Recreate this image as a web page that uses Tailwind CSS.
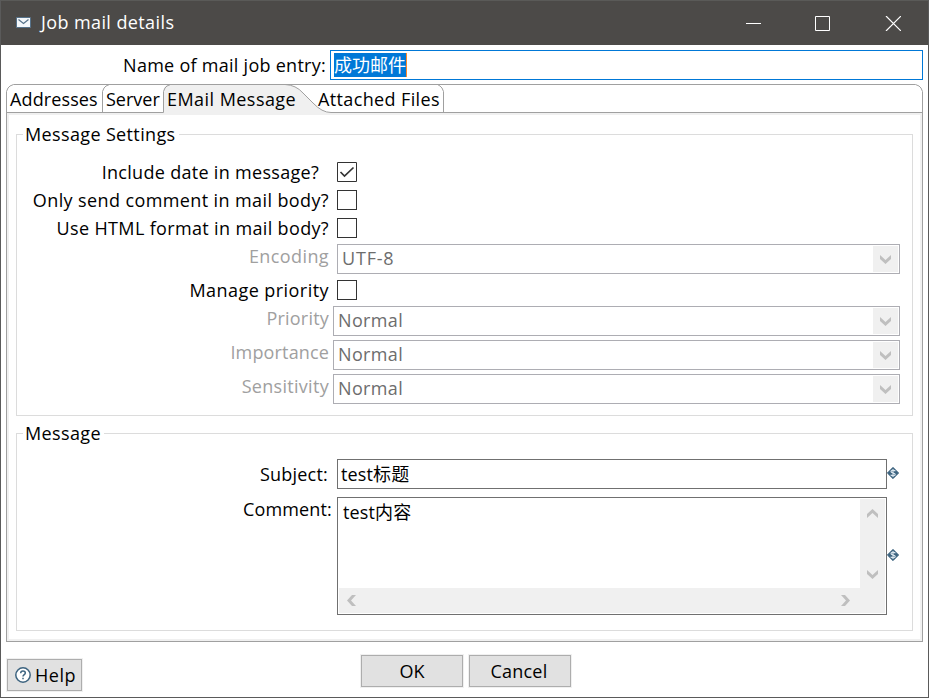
<!DOCTYPE html>
<html lang="en">
<head>
<meta charset="utf-8">
<title>Job mail details</title>
<script src="https://cdn.jsdelivr.net/npm/@tailwindcss/browser@4"></script>
</head>
<body class="overflow-hidden">
<svg class="hidden">
  <symbol id="chev" viewBox="0 0 11 9"><path d="M0 0L5.500 5L11 0V4L5.500 9L0 4Z" fill="currentColor"/></symbol>
  <symbol id="var" viewBox="0 0 12 12"><path d="M6 0.3L11.7 6L6 11.7L0.3 6Z" fill="#3d6480" stroke="#3d6480" stroke-width="0.8" stroke-linejoin="round"/><path d="M8.300 4.200C7.600 2.800 4 3 4 4.600C4 6.400 8.200 5.600 8.200 7.500C8.200 9.100 4.500 9.100 3.700 7.700M6 2V10" fill="none" stroke="#dbe6ee" stroke-width="1.200"/></symbol>
</svg>
<div class="flex h-[698px] w-[929px] flex-col border-x border-b border-[#5a5a5a] bg-white font-['Open_Sans','Noto_Sans_CJK_SC',sans-serif] text-[18px] leading-[28px] whitespace-nowrap text-black">
  <header class="flex h-[45px] shrink-0 items-center border-t border-[#5a5a58] bg-[#4c4a48] text-white">
    <svg class="-mt-[2px] ml-[15px] h-[11px] w-[15px]" viewBox="0 0 15 11"><rect x=".5" y=".5" width="14" height="10" rx=".5" fill="#f4f7fa" stroke="#56728a"/><path d="M2.500 2.500L7.500 6.500L12.500 2.500" fill="none" stroke="#56728a" stroke-width="1.200"/></svg>
    <span class="-mt-[2px] ml-[10px] grow tracking-[0.4px]">Job mail details</span>
    <svg class="mr-[27px] h-[15px] w-[155px]" viewBox="0 0 155 15" fill="none" stroke="#fff"><path d="M0 7.5H15M69.5 .5H83.5V14.5H69.5Z"/><path d="M140 0L155 15M155 0L140 15" stroke-width="1.2"/></svg>
  </header>

  <div class="mt-[5px] flex h-[30px] shrink-0 pr-[5px]">
    <label class="w-[329px] pr-[4px] text-right leading-[30px] tracking-[0.27px]">Name of mail job entry:</label>
    <div class="flex grow items-start border border-[#0078d7] px-[3px] pt-[2px]"><span class="h-[24px] w-[73px] border-r border-[#ff8728] bg-[#0078d7] leading-[25px] text-white">成功邮件</span></div>
  </div>

  <main class="mt-[4px] ml-[5px] flex h-[558px] w-[917px] shrink-0 flex-col">
    <nav class="relative flex h-[29px] shrink-0">
      <svg class="absolute inset-0 h-[29px] w-[917px]" viewBox="0 0 917 29" fill="none" stroke="#a0a0a0">
        <path d="M157.500 29V6Q158 1 163 .5H279Q290 1 297 9L307 19Q316 28.500 325 28.500V29Z" fill="#f0f0f0" stroke="none"/>
        <path d="M.5 29V7.500L2 4L4 2L7.500 .5H909.500L913 2L915 4L916.500 7.500V29"/>
        <path d="M96.500 28V7.500L98 4L100 2L103.500 .5M437.500 28V7.500L436 4L434 2L431.500 .5"/>
        <path d="M0 28.500H157.500V7.500L159 4L161 2L164.500 .5M279 .5Q290 1 297 9L307 19Q316 28.500 325 28.500H917"/>
      </svg>
      <span class="relative w-[96px] pl-[4px] leading-[30px] tracking-[0.12px]">Addresses</span>
      <span class="relative w-[61px] pl-[4px] leading-[30px]">Server</span>
      <span class="relative w-[151px] pl-[4px] leading-[30px] tracking-[0.45px]">EMail Message</span>
      <span class="relative pl-[4px] leading-[30px] tracking-[0.37px]">Attached Files</span>
    </nav>
    <div class="flex grow flex-col border-x border-b border-[#a0a0a0]">
      <div class="flex grow flex-col border-2 border-[#f0f0f0] px-[7px] pt-[19px]">
        <section class="h-[282px] border border-[#dcdcdc]">
          <h2 class="relative -top-[15px] ml-[6px] h-[27px] w-fit bg-white pr-[3px] pl-[2px] tracking-[0.36px]">Message Settings</h2>
          <div class="flex h-[28px] items-start"><span class="w-[320px] pr-[18px] text-right leading-[20px] tracking-[0.3px]">Include date in message?</span><svg class="h-[20px] w-[20px]" viewBox="0 0 20 20" fill="none"><path d="M.5 .5H19.500V19.500H.5Z" stroke="#333"/><path d="M3.500 10L7.500 14L16.500 5.500" stroke="#333" stroke-width="1.700"/></svg></div>
          <div class="flex h-[28px] items-start"><span class="w-[320px] pr-[8px] text-right leading-[20px] tracking-[0.39px]">Only send comment in mail body?</span><i class="size-[20px] border border-[#333]"></i></div>
          <div class="flex h-[26px] items-start"><span class="w-[320px] pr-[8px] text-right leading-[20px] tracking-[0.35px]">Use HTML format in mail body?</span><i class="size-[20px] border border-[#333]"></i></div>
          <div class="flex h-[36px] items-start text-[#a0a0a0]"><span class="w-[320px] pr-[8px] text-right leading-[24px] tracking-[0.4px]">Encoding</span><div class="flex h-[30px] w-[563px] border border-[#adadb3] p-px pl-[4px] text-[#6d6d6d]"><span class="grow leading-[24px] tracking-[0.8px]">UTF-8</span><b class="flex h-[26px] w-[25px] items-center justify-center bg-[#f0f0f0] text-[#bfbfbf]"><svg class="h-[9px] w-[11px]"><use href="#chev"/></svg></b></div></div>
          <div class="flex h-[26px] items-start"><span class="w-[320px] pr-[8px] text-right leading-[20px] tracking-[0.45px]">Manage priority</span><i class="size-[20px] border border-[#333]"></i></div>
          <div class="flex h-[34px] items-start text-[#a0a0a0]"><span class="w-[316px] pr-[4px] text-right leading-[24px] tracking-[0.2px]">Priority</span><div class="flex h-[30px] w-[567px] border border-[#adadb3] p-px pl-[4px] text-[#6d6d6d]"><span class="grow leading-[24px] tracking-[0.35px]">Normal</span><b class="flex h-[26px] w-[25px] items-center justify-center bg-[#f0f0f0] text-[#bfbfbf]"><svg class="h-[9px] w-[11px]"><use href="#chev"/></svg></b></div></div>
          <div class="flex h-[34px] items-start text-[#a0a0a0]"><span class="w-[316px] pr-[4px] text-right leading-[24px] tracking-[0.15px]">Importance</span><div class="flex h-[30px] w-[567px] border border-[#adadb3] p-px pl-[4px] text-[#6d6d6d]"><span class="grow leading-[24px] tracking-[0.35px]">Normal</span><b class="flex h-[26px] w-[25px] items-center justify-center bg-[#f0f0f0] text-[#bfbfbf]"><svg class="h-[9px] w-[11px]"><use href="#chev"/></svg></b></div></div>
          <div class="flex h-[34px] items-start text-[#a0a0a0]"><span class="w-[316px] pr-[4px] text-right leading-[24px] tracking-[0.3px]">Sensitivity</span><div class="flex h-[30px] w-[567px] border border-[#adadb3] p-px pl-[4px] text-[#6d6d6d]"><span class="grow leading-[24px] tracking-[0.35px]">Normal</span><b class="flex h-[26px] w-[25px] items-center justify-center bg-[#f0f0f0] text-[#bfbfbf]"><svg class="h-[9px] w-[11px]"><use href="#chev"/></svg></b></div></div>
        </section>
        <section class="mt-[17px] h-[198px] border border-[#dcdcdc]">
          <h2 class="relative -top-[15px] ml-[6px] h-[25px] w-fit bg-white pr-[3px] pl-[2px] tracking-[0.36px]">Message</h2>
          <div class="flex h-[38px] items-start"><span class="w-[320px] pr-[9px] text-right leading-[30px] tracking-[0.2px]">Subject:</span><div class="h-[30px] w-[550px] border border-[#707070] pl-[3px] leading-[28px] tracking-[0.15px]">test标题</div><svg class="mt-[8px] size-[12px]"><use href="#var"/></svg></div>
          <div class="flex h-[118px] items-start"><span class="w-[320px] pr-[5px] text-right leading-[24px] tracking-[0.15px]">Comment:</span>
            <div class="grid h-[118px] w-[550px] grid-cols-[1fr_25px] grid-rows-[1fr_25px] border border-[#707070] p-px">
              <div class="pl-[4px] leading-[27px] tracking-[0.15px]">test内容</div>
              <div class="flex flex-col items-center justify-between bg-[#f0f0f0] pt-[10px] pb-[9px] text-[#bfbfbf]"><svg class="h-[9px] w-[11px] rotate-180"><use href="#chev"/></svg><svg class="h-[9px] w-[11px]"><use href="#chev"/></svg></div>
              <div class="flex items-center justify-between bg-[#f0f0f0] px-[7px] pr-[9px] text-[#bfbfbf]"><svg class="h-[9px] w-[11px] rotate-90"><use href="#chev"/></svg><svg class="h-[9px] w-[11px] -rotate-90"><use href="#chev"/></svg></div>
              <div class="bg-[#f0f0f0]"></div>
            </div>
            <svg class="mt-[52px] size-[12px]"><use href="#var"/></svg>
          </div>
        </section>
      </div>
    </div>
  </main>

  <footer class="flex items-start pt-[13px] pl-[6px]">
    <div class="mt-[4px] flex h-[32px] w-[75px] items-center border border-[#adadad] bg-[#e1e1e1] pl-[7px] outline outline-[#f0f0f0]"><svg class="size-[16px]" viewBox="0 0 16 16" fill="none"><circle cx="8" cy="8" r="7.200" fill="#fff" stroke="#3d6480" stroke-width="1.500"/><path d="M5.700 6.300C5.700 3.300 10.300 3.500 10.300 6.100C10.300 7.700 8 7.700 8 9.500M8 10.700V12.300" stroke="#3d6480" stroke-width="1.500"/></svg><span class="ml-[4px] tracking-[0.5px]">Help</span></div>
    <div class="ml-[279px] h-[32px] w-[102px] border border-[#adadad] bg-[#e1e1e1] text-center leading-[31px] outline outline-[#f0f0f0]">OK</div>
    <div class="ml-[6px] h-[32px] w-[102px] border border-[#adadad] bg-[#e1e1e1] pr-[2px] text-center leading-[31px] tracking-[0.2px] outline outline-[#f0f0f0]">Cancel</div>
  </footer>
</div>
</body>
</html>
